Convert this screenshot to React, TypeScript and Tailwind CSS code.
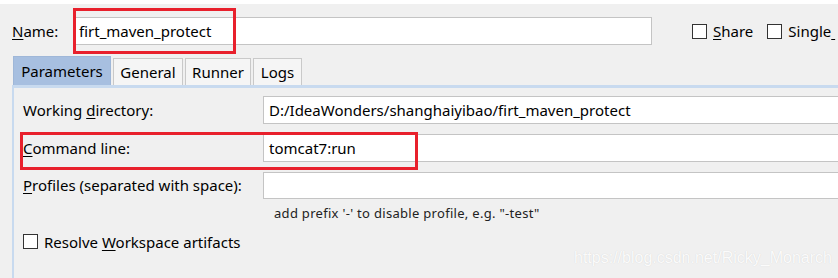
const tabs = [
  { label: 'Parameters', active: true, w: 'w-[98px]' },
  { label: 'General', active: false, w: 'w-[70px]' },
  { label: 'Runner', active: false, w: 'w-[66px]' },
  { label: 'Logs', active: false, w: 'w-[49px]' },
]

function CheckBox() {
  return <span className="inline-block w-[15px] h-[15px] border border-[#333] bg-white shrink-0" />
}

export default function App() {
  return (
    <div
      className="relative w-[838px] h-[278px] overflow-hidden bg-[#f0f0f0] border-t-4 border-white text-[15px] text-black"
      style={{ fontFamily: '"Noto Sans", "Noto Sans CJK SC", sans-serif' }}
    >
      {/* Name row */}
      <div className="flex items-center h-[48px] pt-[6px]">
        <span className="ml-[12px] w-[63px]">
          <span className="underline underline-offset-2">N</span>ame:
        </span>
        <div className="w-[577px] h-[28px] bg-white border border-[#c4c4c4] flex items-center pl-[3px]">
          firt_maven_protect
        </div>
        <div className="flex items-center ml-[40px] gap-[6px]">
          <CheckBox />
          <span>
            <span className="underline underline-offset-2">S</span>hare
          </span>
        </div>
        <div className="flex items-center ml-[14px] gap-[6px] whitespace-nowrap">
          <CheckBox />
          <span>
            Single<span className="underline underline-offset-2">&nbsp;</span>
          </span>
        </div>
      </div>

      {/* Tabs */}
      <div className="flex items-end gap-[2px] ml-[13px] mt-[4px] h-[29px]">
        {tabs.map((t) => (
          <div
            key={t.label}
            className={
              t.active
                ? `${t.w} h-[29px] bg-[#a7bfe0] border border-b-0 border-[#9fb7d8] flex items-center justify-center`
                : `${t.w} h-[27px] bg-[#f5f5f5] border border-b-0 border-[#c9c9c9] flex items-center justify-center`
            }
          >
            {t.label}
          </div>
        ))}
      </div>

      {/* Panel */}
      <div className="ml-[12px] border-t-[3px] border-l-2 border-[#c8daef] h-[200px] pl-[9px] pt-[8px]">
        <div className="grid grid-cols-[240px_1fr] gap-y-[10px] items-center">
          <span>
            Working <span className="underline underline-offset-2">d</span>irectory:
          </span>
          <div className="h-[28px] bg-white border border-[#c4c4c4] border-r-0 flex items-center pl-[5px] whitespace-nowrap">
            D:/IdeaWonders/shanghaiyibao/firt_maven_protect
          </div>
          <span>
            <span className="underline underline-offset-2">C</span>ommand line:
          </span>
          <div className="h-[28px] bg-white border border-[#c4c4c4] border-r-0 flex items-center pl-[5px]">
            tomcat7:run
          </div>
          <span>
            <span className="underline underline-offset-2">P</span>rofiles (separated with space):
          </span>
          <div className="h-[27px] bg-white border border-[#c4c4c4] border-r-0" />
        </div>
        <p className="ml-[251px] mt-[5px] text-[13px] tracking-[0.3px] text-[#222]">
          add prefix '-' to disable profile, e.g. "-test"
        </p>
        <div className="flex items-center gap-[6px] mt-[7px]">
          <CheckBox />
          <span>
            Resolve <span className="underline underline-offset-2">W</span>orkspace artifacts
          </span>
        </div>
      </div>

      {/* Red annotation boxes */}
      <div className="absolute left-[73px] top-[4px] w-[163px] h-[46px] border-[3px] border-[#e8202c]" />
      <div className="absolute left-[20px] top-[128px] w-[398px] h-[38px] border-[3px] border-[#e8202c]" />

      {/* Watermark */}
      <span
        className="absolute left-[574px] top-[244px] text-[16px] leading-[20px] whitespace-nowrap text-white/90"
        style={{ fontFamily: '"Liberation Sans", sans-serif', textShadow: '0 0 1px rgba(0,0,0,0.15)' }}
      >
        https://blog.csdn.net/Ricky_Monarch
      </span>
    </div>
  )
}
